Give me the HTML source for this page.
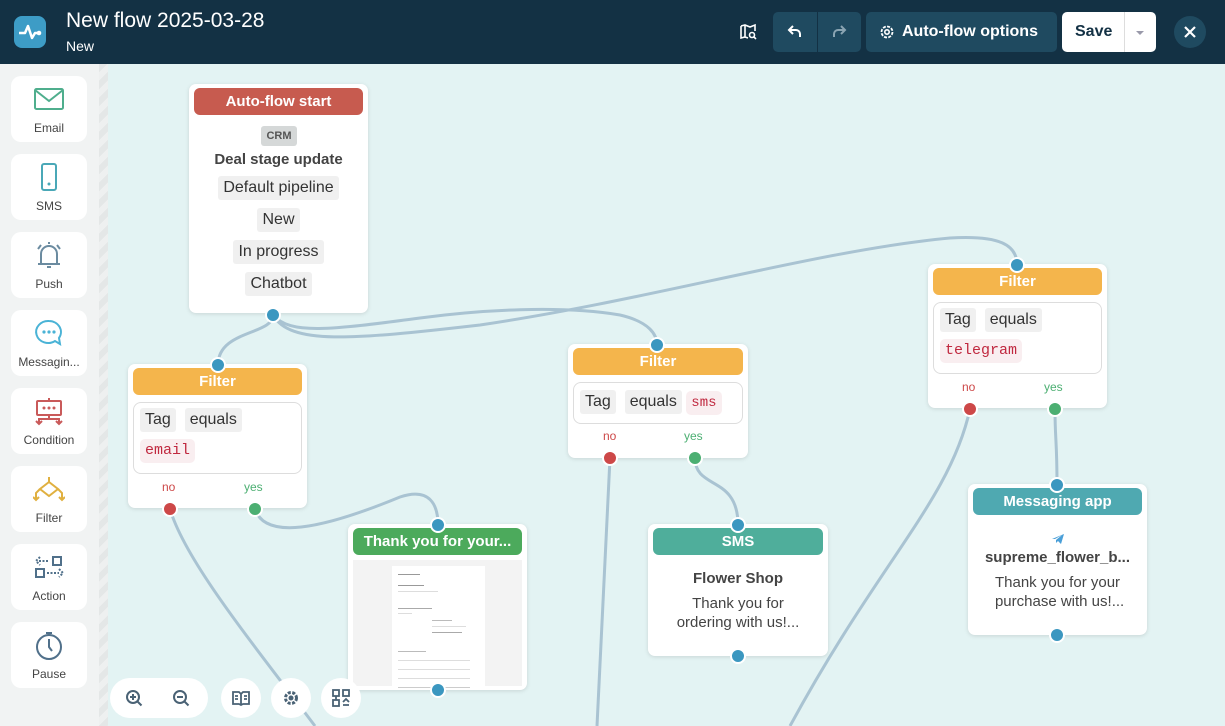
<!DOCTYPE html>
<html><head><meta charset="utf-8">
<style>
*{box-sizing:border-box;margin:0;padding:0}
body{width:1225px;height:726px;overflow:hidden;font-family:"Liberation Sans",sans-serif;background:#e3f3f3;position:relative}
.hdr{position:absolute;left:0;top:0;width:1225px;height:64px;background:#133144;color:#fff}
.side{position:absolute;left:0;top:64px;width:99px;height:662px;background:#f1f3f3}
.stripe{position:absolute;left:99px;top:64px;width:9px;height:662px;background:repeating-linear-gradient(135deg,#e4e7e7 0 6px,#eef0f0 6px 12px)}
.tile{position:absolute;left:11px;width:76px;height:66px;background:#fff;border-radius:10px;text-align:center;font-size:12px;color:#444}
.tile svg{position:absolute;left:22px;top:8px}
.tile span{position:absolute;left:0;right:0;top:45px}
.node{position:absolute;background:#fff;border-radius:7px;box-shadow:0 1px 4px rgba(0,0,0,.12);text-align:center;color:#333}
.nh{position:absolute;left:5px;right:5px;top:4px;height:27px;border-radius:6px;color:#fff;font-weight:bold;font-size:15px;line-height:27px;white-space:nowrap;overflow:hidden}
.pill{display:inline-block;background:#f0f0f0;border-radius:3px;padding:0 5px;font-size:16px;line-height:24px;color:#333}
.code{display:inline-block;background:#f9eef0;border-radius:5px;padding:0 5px;font-family:"Liberation Mono",monospace;color:#c0283f;font-size:15px;line-height:24px}
.box{position:absolute;left:5px;right:5px;border:1px solid #ddd;border-radius:8px;text-align:left;padding:5px 6px}
.dot{position:absolute;width:16px;height:16px;border-radius:50%;border:2.5px solid #fff;background:#3b97c0;margin:-8px 0 0 -8px;z-index:5}
.r{background:#cd4848}.g{background:#4caf72}
.lbl{position:absolute;font-size:12px}
.btn{position:absolute;background:#fff;border-radius:20px;height:40px;top:678px}
.pv div{height:1px;background:#ccc}
</style></head><body>
<svg style="position:absolute;left:0;top:0" width="1225" height="726">
<g fill="none" stroke="#a9c3d2" stroke-width="3">
<path d="M273 315 C273 335 218 330 218 365"/>
<path d="M273 315 C290 335 330 330 420 318 C480 310 560 305 620 315 C650 322 657 335 657 345"/>
<path d="M273 315 C290 345 350 340 480 325 C650 300 820 250 950 238 C1000 235 1017 245 1017 265"/>
<path d="M170 509 C185 560 250 640 315 726"/>
<path d="M255 509 C265 540 320 530 400 497 C430 487 438 505 438 525"/>
<path d="M610 458 L597 726"/>
<path d="M695 458 C695 490 738 475 738 525"/>
<path d="M970 409 C950 500 880 560 790 726"/>
<path d="M1055 409 C1055 440 1057 440 1057 485"/>
</g></svg>

<div class="hdr">
 <div style="position:absolute;left:14px;top:16px;width:32px;height:32px;border-radius:8px;background:#3d9cc6"><svg width="32" height="32"><path d="M5 17h6l3-7 4 12 3-5h5" fill="none" stroke="#fff" stroke-width="2.5" stroke-linejoin="round"/><circle cx="25" cy="17" r="2.3" fill="#fff"/></svg></div>
 <div style="position:absolute;left:66px;top:9px;font-size:21px">New flow 2025-03-28</div>
 <div style="position:absolute;left:66px;top:38px;font-size:14px">New</div>
 <svg style="position:absolute;left:739px;top:23px" width="18" height="18"><path d="M2 3l4-1 5 2 5-2v6M2 3v12l4-1 3 1M6 2v12" fill="none" stroke="#fff" stroke-width="1.6"/><circle cx="13" cy="12" r="2.5" fill="none" stroke="#fff" stroke-width="1.6"/><path d="M15 14l2 2" stroke="#fff" stroke-width="1.6"/></svg>
 <div style="position:absolute;left:773px;top:12px;width:88px;height:40px;background:#1f4a60;border-radius:5px"><div style="position:absolute;left:44px;top:0;width:1px;height:40px;background:#133144"></div>
 <svg style="position:absolute;left:13px;top:11px" width="18" height="18"><path d="M14 14v-3a4 4 0 0 0-4-4H4M7 3L3 7l4 4" fill="none" stroke="#fff" stroke-width="2"/></svg>
 <svg style="position:absolute;left:57px;top:11px" width="18" height="18"><path d="M4 14v-3a4 4 0 0 1 4-4h6M11 3l4 4-4 4" fill="none" stroke="#8aa4b2" stroke-width="2"/></svg></div>
 <div style="position:absolute;left:866px;top:12px;width:191px;height:40px;background:#1f4a60;border-radius:5px;font-weight:bold;font-size:16px;line-height:40px;padding-left:36px">Auto-flow options</div>
 <svg style="position:absolute;left:878px;top:23px" width="18" height="18"><circle cx="9" cy="9" r="5.5" fill="none" stroke="#fff" stroke-width="1.8" stroke-dasharray="3 1.3"/><circle cx="9" cy="9" r="2.2" fill="none" stroke="#fff" stroke-width="1.6"/></svg>
 <div style="position:absolute;left:1062px;top:12px;width:94px;height:40px;background:#fff;border-radius:5px;color:#133144;font-weight:bold;font-size:16px;line-height:40px;padding-left:13px">Save<div style="position:absolute;left:62px;top:0;width:1px;height:40px;background:#ddd"></div><div style="position:absolute;left:74px;top:19px;border:4px solid transparent;border-top:4px solid #99a;"></div></div>
 <div style="position:absolute;left:1174px;top:16px;width:32px;height:32px;border-radius:50%;background:#1f4a60"><svg width="32" height="32"><path d="M11 11l10 10M21 11L11 21" stroke="#fff" stroke-width="2.2"/></svg></div>
</div>

<div class="side"></div><div class="stripe"></div>
<div class="tile" style="top:76px"><svg width="32" height="28"><rect x="2" y="5" width="28" height="20" rx="1.5" fill="none" stroke="#4fae8d" stroke-width="2"/><path d="M2 6l14 11 14-11" fill="none" stroke="#4fae8d" stroke-width="2"/></svg><span>Email</span></div>
<div class="tile" style="top:154px"><svg width="32" height="32"><rect x="9" y="2" width="14" height="26" rx="2" fill="none" stroke="#4aa8b7" stroke-width="2"/><circle cx="16" cy="22" r="1.5" fill="#4aa8b7"/></svg><span>SMS</span></div>
<div class="tile" style="top:232px"><svg width="32" height="32"><path d="M8 24V14a8 8 0 0 1 16 0v10zM5 24h22M14 27h4M16 4V2M5 9l3-4M27 9l-3-4" fill="none" stroke="#6b8ba0" stroke-width="2"/></svg><span>Push</span></div>
<div class="tile" style="top:310px"><svg width="32" height="32"><path d="M16 3a12 11 0 1 0 6 20l5 3-1-6A12 11 0 0 0 16 3z" fill="none" stroke="#4ab3d6" stroke-width="2"/><circle cx="11" cy="14" r="1.6" fill="#4ab3d6"/><circle cx="16" cy="14" r="1.6" fill="#4ab3d6"/><circle cx="21" cy="14" r="1.6" fill="#4ab3d6"/></svg><span>Messagin...</span></div>
<div class="tile" style="top:388px"><svg width="32" height="32"><rect x="4" y="5" width="24" height="14" rx="1" fill="none" stroke="#c95a5a" stroke-width="2"/><path d="M16 2v3M16 19v4M6 27v-4h20v4M3 25l3 3 3-3M23 25l3 3 3-3" fill="none" stroke="#c95a5a" stroke-width="2"/><circle cx="11" cy="12" r="1.5" fill="#c95a5a"/><circle cx="16" cy="12" r="1.5" fill="#c95a5a"/><circle cx="21" cy="12" r="1.5" fill="#c95a5a"/></svg><span>Condition</span></div>
<div class="tile" style="top:466px"><svg width="32" height="32"><path d="M16 3v5M16 8l-9 7 9 7 9-7zM7 15l-4 4v6M25 15l4 4v6M0 23l3 3 3-3M26 23l3 3 3-3" fill="none" stroke="#e0b040" stroke-width="2"/></svg><span>Filter</span></div>
<div class="tile" style="top:544px"><svg width="32" height="32"><path d="M7 5L3 9l4 4M6 9h10M26 17l4 4-4 4M14 21h12" fill="none" stroke="#50708a" stroke-width="2" stroke-dasharray="2 1.5"/><rect x="20" y="5" width="8" height="8" fill="none" stroke="#50708a" stroke-width="2"/><rect x="3" y="17" width="8" height="8" fill="none" stroke="#50708a" stroke-width="2"/></svg><span>Action</span></div>
<div class="tile" style="top:622px"><svg width="32" height="32"><circle cx="16" cy="17" r="12" fill="none" stroke="#50708a" stroke-width="2"/><path d="M13 3h6M16 9v8l3 4" fill="none" stroke="#50708a" stroke-width="2"/></svg><span>Pause</span></div>

<div class="node" style="left:189px;top:84px;width:179px;height:229px">
 <div class="nh" style="background:#c75b4f">Auto-flow start</div>
 <div style="position:absolute;left:72px;top:42px;width:36px;height:20px;background:#d5d8d8;border-radius:3px;font-size:11px;font-weight:bold;line-height:20px;color:#555">CRM</div>
 <div style="position:absolute;left:0;right:0;top:67px;font-weight:bold;font-size:15px;color:#444">Deal stage update</div>
 <div style="position:absolute;left:0;right:0;top:92px"><span class="pill">Default pipeline</span></div>
 <div style="position:absolute;left:0;right:0;top:124px"><span class="pill">New</span></div>
 <div style="position:absolute;left:0;right:0;top:156px"><span class="pill">In progress</span></div>
 <div style="position:absolute;left:0;right:0;top:188px"><span class="pill">Chatbot</span></div>
</div>
<div class="dot" style="left:273px;top:315px"></div>

<div class="node" style="left:128px;top:364px;width:179px;height:144px">
 <div class="nh" style="background:#f4b54c">Filter</div>
 <div class="box" style="top:38px;height:72px"><span class="pill">Tag</span> &nbsp;<span class="pill">equals</span><div style="margin-top:7px"><span class="code">email</span></div></div>
 <div class="lbl" style="left:34px;top:116px;color:#cd4848">no</div><div class="lbl" style="left:116px;top:116px;color:#4caf72">yes</div>
</div>
<div class="dot" style="left:218px;top:365px"></div><div class="dot r" style="left:170px;top:509px"></div><div class="dot g" style="left:255px;top:509px"></div>

<div class="node" style="left:348px;top:524px;width:179px;height:166px">
 <div class="nh" style="background:#4caa5c">Thank you for your...</div>
 <div style="position:absolute;left:5px;top:36px;width:169px;height:126px;background:#f3f3f3">
  <div class="pv" style="position:absolute;left:39px;top:6px;width:93px;height:120px;background:#fff">
   <div style="margin:8px 0 0 6px;width:22px;background:#999"></div>
   <div style="margin:10px 0 0 6px;width:26px;background:#999"></div>
   <div style="margin:5px 0 0 6px;width:40px;background:#ddd"></div>
   <div style="margin:16px 0 0 6px;width:34px;background:#aaa"></div>
   <div style="margin:4px 0 0 6px;width:14px;background:#ddd"></div>
   <div style="margin:6px 0 0 40px;width:20px;background:#bbb"></div>
   <div style="margin:5px 0 0 40px;width:34px;background:#ddd"></div>
   <div style="margin:5px 0 0 40px;width:30px;background:#aaa"></div>
   <div style="margin:18px 0 0 6px;width:28px;background:#bbb"></div>
   <div style="margin:8px 0 0 6px;width:72px;background:#ddd"></div>
   <div style="margin:8px 0 0 6px;width:72px;background:#ddd"></div>
   <div style="margin:8px 0 0 6px;width:72px;background:#ddd"></div>
   <div style="margin:8px 0 0 6px;width:72px;background:#ccc"></div>
  </div>
 </div>
</div>
<div class="dot" style="left:438px;top:525px"></div><div class="dot" style="left:438px;top:690px"></div>

<div class="node" style="left:568px;top:344px;width:180px;height:114px">
 <div class="nh" style="background:#f4b54c">Filter</div>
 <div class="box" style="top:38px;height:42px;padding-top:7px"><span class="pill">Tag</span> &nbsp;<span class="pill">equals</span> <span class="code" style="font-size:14px">sms</span></div>
 <div class="lbl" style="left:35px;top:85px;color:#cd4848">no</div><div class="lbl" style="left:116px;top:85px;color:#4caf72">yes</div>
</div>
<div class="dot" style="left:657px;top:345px"></div><div class="dot r" style="left:610px;top:458px"></div><div class="dot g" style="left:695px;top:458px"></div>

<div class="node" style="left:648px;top:524px;width:180px;height:132px">
 <div class="nh" style="background:#4fae9b">SMS</div>
 <div style="position:absolute;left:0;right:0;top:46px;font-weight:bold;font-size:15px;color:#444">Flower Shop</div>
 <div style="position:absolute;left:0;right:0;top:70px;font-size:15px;line-height:19px;color:#444">Thank you for<br>ordering with us!...</div>
</div>
<div class="dot" style="left:738px;top:525px"></div><div class="dot" style="left:738px;top:656px"></div>

<div class="node" style="left:928px;top:264px;width:179px;height:144px">
 <div class="nh" style="background:#f4b54c">Filter</div>
 <div class="box" style="top:38px;height:72px"><span class="pill">Tag</span> &nbsp;<span class="pill">equals</span><div style="margin-top:7px"><span class="code">telegram</span></div></div>
 <div class="lbl" style="left:34px;top:116px;color:#cd4848">no</div><div class="lbl" style="left:116px;top:116px;color:#4caf72">yes</div>
</div>
<div class="dot" style="left:1017px;top:265px"></div><div class="dot r" style="left:970px;top:409px"></div><div class="dot g" style="left:1055px;top:409px"></div>

<div class="node" style="left:968px;top:484px;width:179px;height:151px">
 <div class="nh" style="background:#4fa9b1">Messaging app</div>
 <svg style="position:absolute;left:83px;top:49px" width="14" height="12"><path d="M1 6L13 1 10 11 7 8 5 10 5 7 11 2 4 6z" fill="#4a9fd8"/></svg>
 <div style="position:absolute;left:0;right:0;top:65px;font-weight:bold;font-size:15px;color:#444">supreme_flower_b...</div>
 <div style="position:absolute;left:0;right:0;top:89px;font-size:15px;line-height:19px;color:#444">Thank you for your<br>&nbsp;purchase with us!...</div>
</div>
<div class="dot" style="left:1057px;top:485px"></div><div class="dot" style="left:1057px;top:635px"></div>

<div class="btn" style="left:110px;width:98px"><svg style="position:absolute;left:15px;top:11px" width="70" height="20"><g fill="none" stroke="#4a6275" stroke-width="2"><circle cx="8" cy="8" r="6"/><path d="M12.5 12.5l4 4M5 8h6M8 5v6"/><circle cx="55" cy="8" r="6"/><path d="M59.5 12.5l4 4M52 8h6"/></g></svg></div>
<div class="btn" style="left:221px;width:40px"><svg style="position:absolute;left:11px;top:11px" width="18" height="18"><path d="M1 3h6l2 2 2-2h6v12h-6l-2 1-2-1H1zM9 5v11M3 7h3M3 10h3M12 7h3M12 10h3" fill="none" stroke="#4a6275" stroke-width="1.8"/></svg></div>
<div class="btn" style="left:271px;width:40px"><svg style="position:absolute;left:11px;top:11px" width="18" height="18"><circle cx="9" cy="9" r="5.5" fill="none" stroke="#4a6275" stroke-width="3" stroke-dasharray="3 1.5"/><circle cx="9" cy="9" r="2.5" fill="#4a6275"/></svg></div>
<div class="btn" style="left:321px;width:40px"><svg style="position:absolute;left:11px;top:11px" width="18" height="18"><g fill="none" stroke="#4a6275" stroke-width="1.8"><rect x="1" y="1" width="6" height="6"/><rect x="11" y="1" width="6" height="6"/><rect x="1" y="11" width="6" height="6"/><path d="M4 7v4M11 13l3-3 3 3M11 16h6"/></g></svg></div>
</body></html>
